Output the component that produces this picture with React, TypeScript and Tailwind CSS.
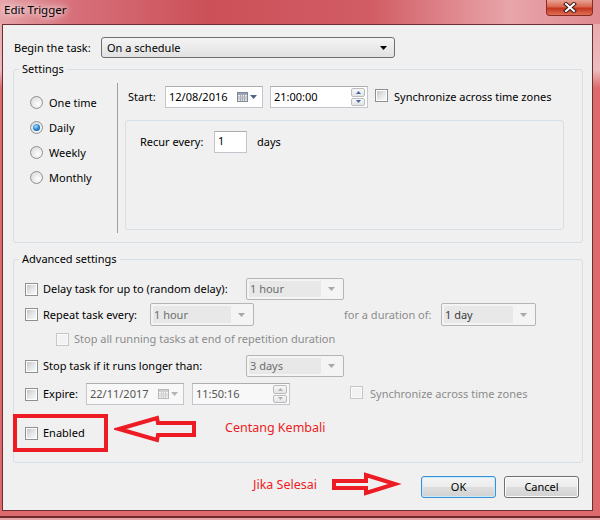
import React from "react";

const ui = "font-['Noto_Sans',sans-serif] text-[11px] leading-[14px] text-black";

const CheckBox = ({ disabled = false }: { disabled?: boolean }) => (
  <span
    className={`inline-block w-[13px] h-[13px] shrink-0 border p-[1px] ${
      disabled ? "border-[#c6c6c6] bg-[#fafafa]" : "border-[#8e8f8f] bg-white"
    }`}
  >
    <span
      className={`block w-full h-full ${
        disabled ? "bg-[#f2f2f2]" : "bg-gradient-to-br from-[#c4c7cc] via-[#e4e5e7] to-[#f8f8f8]"
      }`}
    />
  </span>
);

const Radio = ({ label, checked = false }: { label: string; checked?: boolean }) => (
  <div className="flex items-center h-[25px]">
    <span className="inline-flex items-center justify-center w-[13px] h-[13px] shrink-0 rounded-full border border-[#8e8f8f] bg-[radial-gradient(circle_at_65%_65%,#ffffff,#d4d4d4)]">
      {checked && (
        <span className="w-[7px] h-[7px] rounded-full bg-[radial-gradient(circle_at_40%_35%,#9fe0ff,#1f7fd0_55%,#0b3a78)]" />
      )}
    </span>
    <span className="ml-[6px]">{label}</span>
  </div>
);

const Tri = ({ color = "#000000" }: { color?: string }) => (
  <svg width="7" height="4" viewBox="0 0 7 4">
    <polygon points="0,0 7,0 3.5,4" fill={color} />
  </svg>
);

const DisCombo = ({ w, text, dark = false }: { w: string; text: string; dark?: boolean }) => (
  <div className={`flex items-center h-full border border-[#b5b5b5] rounded-[2px] bg-[#f4f4f4] p-[2px] ${w}`}>
    <span className={`flex-1 h-full flex items-center pl-[1px] bg-[#e8e8e8] ${dark ? "text-[#3c3c3c]" : "text-[#6d6d6d]"}`}>
      {text}
    </span>
    <span className="w-[20px] flex justify-center">
      <Tri color="#a8a8a8" />
    </span>
  </div>
);

const CalendarIcon = ({ disabled = false }: { disabled?: boolean }) => (
  <span className="flex items-center gap-[2px]">
    <svg width="11" height="10" viewBox="0 0 11 10">
      <rect x="0.5" y="0.5" width="10" height="9" fill={disabled ? "#f4f4f4" : "#ececec"} stroke={disabled ? "#b8b8b8" : "#808896"} />
      <rect x="1" y="1" width="9" height="2" fill={disabled ? "#d0d0d0" : "#9aa6b8"} />
      <path d="M3.5 3v6M5.5 3v6M7.5 3v6M1 5h9M1 7h9" stroke={disabled ? "#cfcfcf" : "#a8aeb8"} strokeWidth="1" />
    </svg>
    <svg width="7" height="4" viewBox="0 0 7 4">
      <polygon points="0,0 7,0 3.5,4" fill={disabled ? "#b4b4b4" : "#4f6382"} />
    </svg>
  </span>
);

const DateBox = ({ text, disabled = false }: { text: string; disabled?: boolean }) => (
  <div
    className={`flex items-center w-[98px] h-full border border-[#c3c6cc] border-t-[#abadb3] pl-[3px] pr-[5px] ${
      disabled ? "bg-[#f8f8f8] text-[#555555]" : "bg-white"
    }`}
  >
    <span className="flex-1">{text}</span>
    <CalendarIcon disabled={disabled} />
  </div>
);

const SpinPart = ({ up, disabled }: { up: boolean; disabled: boolean }) => (
  <span className="flex-1 flex items-center justify-center border border-[#bcbcbc] rounded-[2px] bg-gradient-to-b from-[#f8f8f8] to-[#e4e4e4]">
    <svg width="5" height="3" viewBox="0 0 5 3">
      <polygon points={up ? "0,3 2.5,0 5,3" : "0,0 5,0 2.5,3"} fill={disabled ? "#b0b0b0" : "#3f66a8"} />
    </svg>
  </span>
);

const TimeBox = ({ text, disabled = false }: { text: string; disabled?: boolean }) => (
  <div
    className={`flex items-center w-[98px] h-full border border-[#c3c6cc] border-t-[#abadb3] pl-[3px] pr-[2px] ${
      disabled ? "bg-[#f8f8f8] text-[#555555]" : "bg-white"
    }`}
  >
    <span className="flex-1">{text}</span>
    <div className="flex flex-col gap-[1px] w-[14px] h-[18px]">
      <SpinPart up disabled={disabled} />
      <SpinPart up={false} disabled={disabled} />
    </div>
  </div>
);

const App = () => {
  return (
    <div
      className={`relative w-[600px] h-[520px] flex flex-col bg-[linear-gradient(to_bottom,#e7a2a6_0px,#ecbcbe_70px,#dc6a6d_88px,#dc6a6d_516px,#6e2a2c_516px,#6e2a2c_518px,#e8a8aa_518px)] ${ui}`}
    >
      {/* Title bar */}
      <div className="h-[24px] flex items-start bg-[linear-gradient(to_right,#e6a3a8_0%,#d6707a_12%,#cc5058_35%,#d25d65_62%,#e8a5aa_85%,#df8a90_100%)]">
        <span className="pl-[4px] pt-[3px] text-[11.5px] [text-shadow:0_0_6px_#ffffff,0_0_10px_#ffffff]">
          Edit Trigger
        </span>
        <div className="ml-auto mr-[7px] w-[47px] h-[16px] rounded-b-[4px] border border-t-0 border-[#8a2a22] bg-[linear-gradient(to_bottom,#e8a393_0%,#d9664f_45%,#c3351f_55%,#e07055_100%)] flex items-center justify-center">
          <svg width="14" height="11" viewBox="0 0 14 11">
            <path d="M3 2l8 7M11 2l-8 7" stroke="#3b1b18" strokeWidth="4" strokeLinecap="square" />
            <path d="M3 2l8 7M11 2l-8 7" stroke="#ffffff" strokeWidth="2" strokeLinecap="square" />
          </svg>
        </div>
      </div>

      {/* Client area */}
      <div className="flex-1 flex pl-[2px] pr-[7px] pb-[9px]">
        <div className="flex-1 flex flex-col bg-[#f0f0f0] border border-[#6b2f31]">
          <div className="flex items-center h-[21px] mt-[12px] pl-[11px]">
            <span className="w-[87px]">Begin the task:</span>
            <div className="flex items-center w-[294px] h-full border border-[#707070] rounded-[3px] bg-gradient-to-b from-[#f4f4f4] to-[#e1e1e1] pl-[5px] pr-[7px]">
              <span className="flex-1">On a schedule</span>
              <Tri />
            </div>
          </div>

          {/* Settings */}
          <fieldset className="mt-[4px] ml-[10px] mr-[9px] border border-[#d5dfe5] rounded-[3px] pt-[7px] pb-[9px]">
            <legend className="ml-[5px] px-[3px] leading-[14px]">Settings</legend>
            <div className="flex h-[150px]">
              <div className="w-[103px] pl-[16px] pt-[7px] flex flex-col">
                <Radio label="One time" />
                <Radio label="Daily" checked />
                <Radio label="Weekly" />
                <Radio label="Monthly" />
              </div>
              <div className="flex-1 flex flex-col border-l border-[#a0a0a0] py-[3px] pl-[7px] pr-[18px]">
                <div className="flex items-center h-[22px] pl-[3px]">
                  <span className="w-[37px]">Start:</span>
                  <DateBox text="12/08/2016" />
                  <span className="ml-[7px] h-full flex">
                    <TimeBox text="21:00:00" />
                  </span>
                  <span className="ml-[7px]">
                    <CheckBox />
                  </span>
                  <span className="ml-[6px]">Synchronize across time zones</span>
                </div>
                <div className="mt-[12px] flex-1 border border-[#d5dfe5] rounded-[3px] pl-[14px] pt-[10px]">
                  <div className="flex items-center h-[22px]">
                    <span className="w-[74px]">Recur every:</span>
                    <div className="w-[33px] h-full border border-[#c3c6cc] border-t-[#abadb3] bg-white pl-[3px] pt-[2px]">1</div>
                    <span className="ml-[10px]">days</span>
                  </div>
                </div>
              </div>
            </div>
          </fieldset>

          {/* Advanced settings */}
          <fieldset className="mt-[9px] ml-[10px] mr-[9px] border border-[#d5dfe5] rounded-[3px] pt-[12px] pb-[22px]">
            <legend className="ml-[5px] px-[3px] leading-[14px]">Advanced settings</legend>
            <div className="flex flex-col pl-[11px]">
              <div className="flex items-center h-[22px]">
                <CheckBox />
                <span className="ml-[5px] w-[203px]">Delay task for up to (random delay):</span>
                <DisCombo w="w-[98px]" text="1 hour" />
              </div>
              <div className="flex items-center h-[23px] mt-[3px]">
                <CheckBox />
                <span className="ml-[5px] w-[107px]">Repeat task every:</span>
                <DisCombo w="w-[104px]" text="1 hour" />
                <span className="ml-[90px] w-[97px] text-[#8c8c8c]">for a duration of:</span>
                <DisCombo w="w-[95px]" text="1 day" dark />
              </div>
              <div className="flex items-center h-[14px] mt-[6px] pl-[31px]">
                <CheckBox disabled />
                <span className="ml-[5px] text-[#8c8c8c]">Stop all running tasks at end of repetition duration</span>
              </div>
              <div className="flex items-center h-[22px] mt-[9px]">
                <CheckBox />
                <span className="ml-[5px] w-[203px]">Stop task if it runs longer than:</span>
                <DisCombo w="w-[98px]" text="3 days" />
              </div>
              <div className="flex items-center h-[22px] mt-[6px]">
                <CheckBox />
                <span className="ml-[5px] w-[43px]">Expire:</span>
                <DateBox text="22/11/2017" disabled />
                <span className="ml-[8px] h-full flex">
                  <TimeBox text="11:50:16" disabled />
                </span>
                <span className="ml-[60px]">
                  <CheckBox disabled />
                </span>
                <span className="ml-[7px] text-[#8c8c8c]">Synchronize across time zones</span>
              </div>
              <div className="flex items-center h-[14px] mt-[21px]">
                <CheckBox />
                <span className="ml-[5px]">Enabled</span>
              </div>
            </div>
          </fieldset>

          <div className="flex justify-end gap-[8px] mt-[13px] pr-[13px]">
            <button className="w-[75px] h-[22px] rounded-[3px] border border-[#3c8fd0] shadow-[inset_0_0_0_1px_#c4ecfd] bg-[linear-gradient(to_bottom,#f4f4f4_0%,#ececec_50%,#dedede_50%,#d2d2d2_100%)]">
              OK
            </button>
            <button className="w-[75px] h-[22px] rounded-[3px] border border-[#707070] shadow-[inset_0_0_0_1px_#fcfcfc] bg-[linear-gradient(to_bottom,#f4f4f4_0%,#ececec_50%,#dedede_50%,#d2d2d2_100%)]">
              Cancel
            </button>
          </div>
        </div>
      </div>

      {/* Annotations */}
      <div className="absolute left-[13px] top-[414px] w-[95px] h-[38px] border-4 border-[#ed1c24]" />
      <svg className="absolute left-[114px] top-[413px]" width="88" height="33" viewBox="0 0 88 33">
        <polygon points="5,16 43,5 44,10 80,10 80,22 44,22 43,27" fill="none" stroke="#ed1c24" strokeWidth="4" strokeLinejoin="miter" />
      </svg>
      <span className="absolute left-[225px] top-[420px] text-[12.5px] leading-[16px] text-[#ed1c24]">Centang Kembali</span>
      <span className="absolute left-[253px] top-[477px] text-[12.5px] leading-[16px] text-[#ed1c24]">Jika Selesai</span>
      <svg className="absolute left-[328px] top-[469px]" width="74" height="30" viewBox="0 0 74 30">
        <polygon points="6,12 38,12 38,6 67,15 38,24 38,19 6,19" fill="none" stroke="#ed1c24" strokeWidth="4" strokeLinejoin="miter" />
      </svg>
    </div>
  );
};

export default App;
